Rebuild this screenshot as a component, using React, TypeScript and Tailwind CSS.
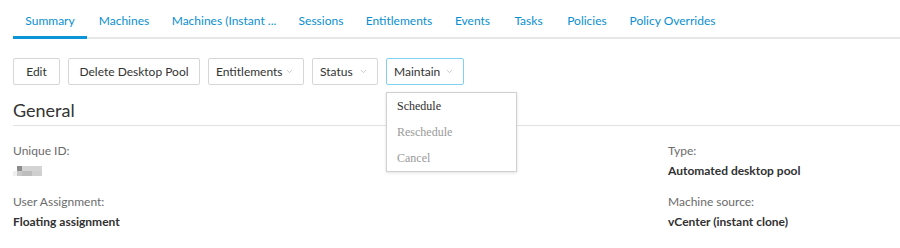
import { ChevronDown } from "lucide-react";

const tabs: [string, string][] = [
  ["Summary", "w-[74px]"],
  ["Machines", "w-[74px]"],
  ["Machines (Instant ...", "w-[126px]"],
  ["Sessions", "w-[68px]"],
  ["Entitlements", "w-[88px]"],
  ["Events", "w-[59px]"],
  ["Tasks", "w-[53px]"],
  ["Policies", "w-[64px]"],
  ["Policy Overrides", "w-[107px]"],
];

function ActionButton({
  label,
  width,
  menu,
  active,
}: {
  label: string;
  width: string;
  menu?: boolean;
  active?: boolean;
}) {
  return (
    <button
      className={`${width} h-[27px] flex items-center rounded-[2px] border bg-white text-[12px] text-[#333] ${
        menu ? "justify-between pl-[7px] pr-[9px]" : "justify-center"
      } ${active ? "border-[#7fd0f5]" : "border-[#d6d6d6]"}`}
    >
      <span>{label}</span>
      {menu && <ChevronDown size={9} strokeWidth={1.5} className="text-[#a0a0a0]" />}
    </button>
  );
}

function Field({ label, value }: { label: string; value: React.ReactNode }) {
  return (
    <div className="mb-[15px]">
      <div className="text-[12px] leading-[16px] text-[#6b6b6b]">{label}</div>
      <div className="mt-[4px] text-[12px] leading-[16px] font-bold text-[#313131]">{value}</div>
    </div>
  );
}

// blurred id placeholder
function Redacted() {
  return (
    <div className="flex flex-col h-[16px] justify-center">
      <div className="flex">
        <div className="w-[4px] h-[5px]" />
        <div className="w-[5px] h-[5px] bg-[#8c8c8c]" />
        <div className="w-[20px] h-[5px] bg-[#d4d4d4]" />
      </div>
      <div className="flex">
        <div className="w-[4px] h-[5px] bg-[#efefef]" />
        <div className="w-[5px] h-[5px] bg-[#c8c8c8]" />
        <div className="w-[10px] h-[5px] bg-[#bdbdbd]" />
        <div className="w-[10px] h-[5px] bg-[#cfcfcf]" />
      </div>
    </div>
  );
}

export default function App() {
  return (
    <div className="w-[900px] h-[248px] bg-white pl-[13px] overflow-hidden font-['Lato','Open_Sans',sans-serif]">
      <nav className="flex border-b-2 border-[#e6e6e6]">
        {tabs.map(([t, w], i) => (
          <div
            key={t}
            className={`${w} text-center whitespace-nowrap pt-[13px] pb-[8px] -mb-[2px] border-b-[3px] text-[12px] leading-[15px] text-[#0a8fd1] ${
              i === 0 ? "border-[#0a95d8]" : "border-transparent"
            }`}
          >
            {t}
          </div>
        ))}
      </nav>

      <div className="mt-[19px] flex gap-[8px]">
        <ActionButton label="Edit" width="w-[47px]" />
        <ActionButton label="Delete Desktop Pool" width="w-[132px]" />
        <ActionButton label="Entitlements" width="w-[96px]" menu />
        <ActionButton label="Status" width="w-[66px]" menu />
        <div className="relative">
          <ActionButton label="Maintain" width="w-[78px]" menu active />
          <div className="absolute left-0 top-[34px] z-10 w-[131px] border border-[#d0d0d0] bg-white shadow-[0_1px_3px_rgba(0,0,0,0.12)] font-['Liberation_Serif',serif] text-[12px]">
            <div className="h-[26px] pb-[1px] flex items-center px-[10px] text-[#2e2e2e]">Schedule</div>
            <div className="h-[26px] pb-[1px] flex items-center px-[10px] text-[#9a9a9a]">Reschedule</div>
            <div className="h-[26px] pb-[1px] flex items-center px-[10px] text-[#9a9a9a]">Cancel</div>
          </div>
        </div>
      </div>

      <h2 className="mt-[13px] pb-[3px] border-b border-[#e2e2e2] text-[18px] leading-[24px] text-[#333]">General</h2>

      <div className="mt-[17px] grid grid-cols-[655px_1fr]">
        <div>
          <Field label="Unique ID:" value={<Redacted />} />
          <Field label="User Assignment:" value="Floating assignment" />
        </div>
        <div>
          <Field label="Type:" value="Automated desktop pool" />
          <Field label="Machine source:" value="vCenter (instant clone)" />
        </div>
      </div>
    </div>
  );
}
